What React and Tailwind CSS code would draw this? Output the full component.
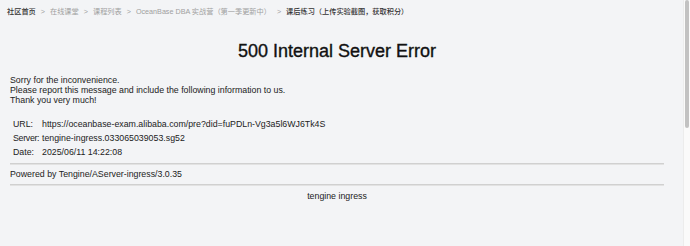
export default function App() {
  const crumbs = ["在线课堂", "课程列表", "OceanBase DBA 实战营（第一季更新中）"];
  return (
    <div className="flex h-[246px] w-[690px] overflow-hidden bg-[#f3f4f6] font-['Liberation_Sans','Noto_Sans_CJK_SC',sans-serif]">
      <div className="flex flex-1 flex-col">
        <div className="flex items-center pl-[7px] pt-[7px] text-[7.2px] leading-[10px] text-[#a0a0a0]">
          <span className="font-medium text-[#333]">社区首页</span>
          {crumbs.map((c) => (
            <span key={c} className="flex items-center">
              <span className="mx-[5px]">&gt;</span>
              <span>{c}</span>
            </span>
          ))}
          <span className="mx-[5px] ml-[6px]">&gt;</span>
          <span className="font-medium text-[#333]">课后练习（上传实验截图，获取积分）</span>
        </div>
        <div className="ml-[10px] w-[654px] text-[8.8px] leading-[10px] text-[#222]">
          <h1 className="mt-[23px] text-center text-[18px] leading-[22px] font-medium text-[#111] [-webkit-text-stroke:0.35px_#111]">
            500 Internal Server Error
          </h1>
          <p className="mt-[12px] pt-[1px]">
            Sorry for the inconvenience.
            <br />
            Please report this message and include the following information to us.
            <br />
            Thank you very much!
          </p>
          <table className="mt-[12px] ml-[3px] border-separate border-spacing-0">
            <tbody>
              <tr className="h-[14px]">
                <td className="w-[28px] whitespace-nowrap align-middle">URL:</td>
                <td className="whitespace-nowrap pl-[1px] align-middle">https://oceanbase-exam.alibaba.com/pre?did=fuPDLn-Vg3a5l6WJ6Tk4S</td>
              </tr>
              <tr className="h-[14px]">
                <td className="whitespace-nowrap align-middle tracking-[-0.3px]">Server:</td>
                <td className="whitespace-nowrap pl-[1px] align-middle">tengine-ingress.033065039053.sg52</td>
              </tr>
              <tr className="h-[14px]">
                <td className="whitespace-nowrap align-middle">Date:</td>
                <td className="whitespace-nowrap pl-[1px] align-middle">2025/06/11 14:22:08</td>
              </tr>
            </tbody>
          </table>
          <div className="mt-[4px] h-[2px] border-t border-[#d0d0d0] bg-[#e2e2e2]" />
          <div className="mt-[4px]">Powered by Tengine/AServer-ingress/3.0.35</div>
          <div className="mt-[5px] h-[2px] border-t border-[#d0d0d0] bg-[#e2e2e2]" />
          <div className="mt-[5px] text-center">tengine ingress</div>
        </div>
      </div>
      <div className="flex w-[7px] flex-col border-l border-[#ececec] bg-[#fafafa] pl-[1px] pr-[1px]">
        <div className="h-[128px] w-[4px] rounded-[2px] bg-[#c2c2c2]" />
      </div>
    </div>
  );
}
